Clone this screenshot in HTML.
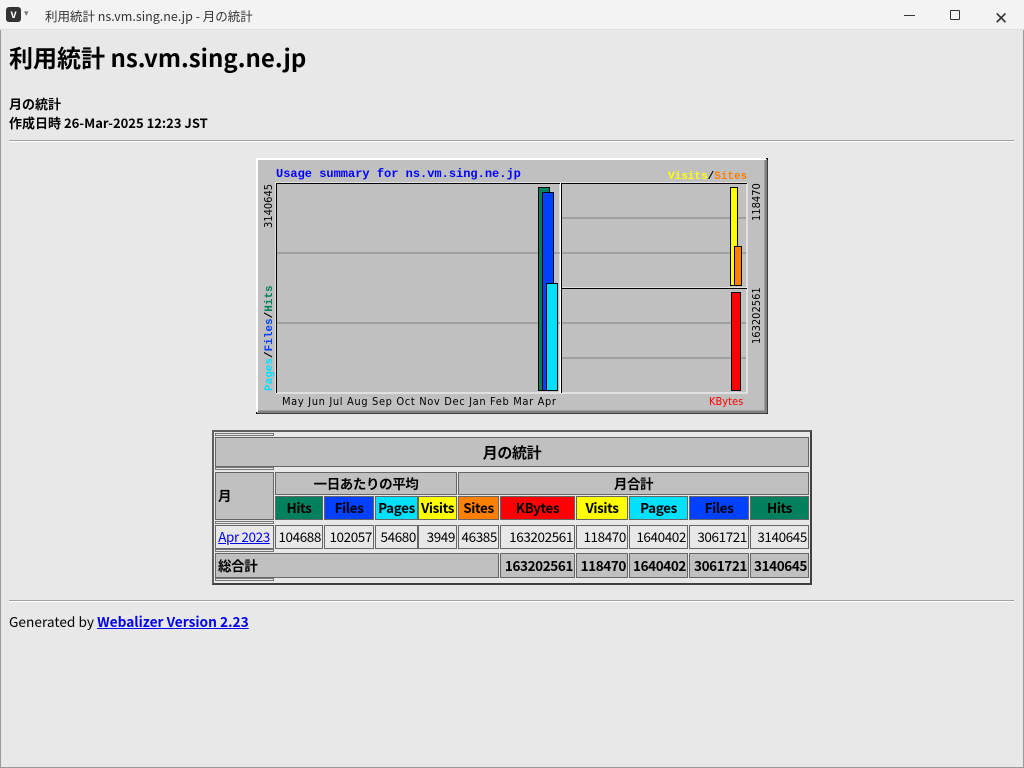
<!DOCTYPE html>
<html><head><meta charset="utf-8"><style>
*{margin:0;padding:0;box-sizing:border-box}
body{width:1024px;height:768px;background:#e8e8e8;font-family:"Noto Sans CJK JP","Liberation Sans",sans-serif;color:#000;position:relative;overflow:hidden}
.a{position:absolute}
.tb{left:0;top:0;width:1024px;height:30px;background:#f3f3f3;border-bottom:1px solid #e0e0e0}
.c{position:absolute;border:1px solid #666;font-size:13.5px;font-weight:bold;display:flex;align-items:center;justify-content:center;line-height:1;white-space:nowrap;letter-spacing:-0.4px;overflow:hidden}
.h{background:#c0c0c0}
.d{background:#e8e8e8;justify-content:flex-end;padding-right:1px;font-weight:normal}
.s{position:absolute;height:3px;border:1px solid #777;background:#e8e8e8}
</style></head><body>
<div class="a" style="left:0;top:0;width:1024px;height:768px;border:1px solid #9a9a9a;border-top:none"></div>
<div class="a tb">
 <div class="a" style="left:6px;top:7px;width:15px;height:15px;background:#333;border-radius:3px;color:#fff;font-size:11px;font-weight:bold;text-align:center;line-height:15px">v</div>
 <div class="a" style="left:24px;top:6px;font-size:9px;color:#777">▾</div>
 <div class="a" style="left:45px;top:6px;font-size:12.5px;color:#333">利用統計 ns.vm.sing.ne.jp - 月の統計</div>
 <div class="a" style="left:904px;top:15px;width:11px;height:1px;background:#333"></div>
 <div class="a" style="left:950px;top:10px;width:10px;height:10px;border:1px solid #333;border-radius:1px"></div>
 <div class="a" style="left:994px;top:4px;font-size:17px;color:#333;font-weight:300">✕</div>
</div>
<div class="a" style="left:9px;top:39px;font-size:24px;font-weight:bold">利用統計 ns.vm.sing.ne.jp</div>
<div class="a" style="left:9px;top:94px;font-size:13px;font-weight:bold;line-height:19px">月の統計<br>作成日時 26-Mar-2025 12:23 JST</div>
<div class="a" style="left:9px;top:140px;width:1005px;height:2px;border-top:1px solid #a0a0a0;border-bottom:1px solid #fff"></div>

<svg class="a" style="left:256px;top:158px" width="512" height="256" viewBox="0 0 512 256" font-family="Liberation Mono,DejaVu Sans Mono,monospace">
<rect x="0" y="0" width="512" height="256" fill="#c0c0c0"/>
<rect x="0.5" y="0.5" width="511" height="255" fill="none" stroke="#000"/>
<path d="M1 254V1H510" stroke="#fff" stroke-width="2" fill="none"/>
<path d="M2 254H510V2" stroke="#808080" stroke-width="3" fill="none"/>
<text x="20" y="19" fill="#0000ff" font-size="12" font-weight="bold">Usage summary for ns.vm.sing.ne.jp</text>
<text x="412" y="21" font-size="11" font-weight="bold"><tspan fill="#ffff00">Visits</tspan><tspan fill="#000">/</tspan><tspan fill="#ff8000">Sites</tspan></text>
<rect x="20" y="25" width="284" height="210" fill="#c0c0c0" stroke="#fff" stroke-width="1"/>
<path d="M21 95H304M21 165H304" stroke="#808080"/>
<rect x="305" y="25" width="186" height="105" fill="#c0c0c0" stroke="#fff"/>
<rect x="305" y="130" width="186" height="105" fill="#c0c0c0" stroke="#fff"/>
<path d="M21 25.5H304M20.5 25V235M305.5 25V235M305 130.5H491M305 25.5H491" stroke="#000"/>
<path d="M306 60H490M306 95H490M306 165H490M306 200H490" stroke="#808080"/>
<rect x="282.5" y="29.5" width="11" height="203" fill="#00805c" stroke="#000"/>
<rect x="286.5" y="34.5" width="11" height="198" fill="#0040ff" stroke="#000"/>
<rect x="290.5" y="125.5" width="11" height="107" fill="#00e0ff" stroke="#000"/>
<rect x="474.5" y="29.5" width="7" height="98" fill="#ffff00" stroke="#000"/>
<rect x="478.5" y="88.5" width="7" height="39" fill="#ff8000" stroke="#000"/>
<rect x="475.5" y="134.5" width="9" height="98" fill="#ff0000" stroke="#000"/>
<text transform="translate(16,233) rotate(-90)" font-size="11" font-weight="bold"><tspan fill="#00e0ff">Pages</tspan><tspan fill="#000">/</tspan><tspan fill="#0040ff">Files</tspan><tspan fill="#000">/</tspan><tspan fill="#00805c">Hits</tspan></text>
<text transform="translate(16,70) rotate(-90)" font-size="11" font-family="DejaVu Sans Condensed,Liberation Sans,sans-serif">3140645</text>
<text transform="translate(504,63) rotate(-90)" font-size="11" font-family="DejaVu Sans Condensed,Liberation Sans,sans-serif">118470</text>
<text transform="translate(504,186) rotate(-90)" font-size="11" font-family="DejaVu Sans Condensed,Liberation Sans,sans-serif">163202561</text>
<text x="26" y="247" font-size="11" font-family="DejaVu Sans Condensed,Liberation Sans,sans-serif" textLength="274" lengthAdjust="spacing">May Jun Jul Aug Sep Oct Nov Dec Jan Feb Mar Apr</text>
<text x="453" y="247" font-size="11" fill="#ff0000" font-family="DejaVu Sans Condensed,Liberation Sans,sans-serif">KBytes</text>
</svg>

<div class="a" style="left:212px;top:430px;width:600px;height:155px;border:2px solid #606060;border-right-color:#404040;border-bottom-color:#404040;background:#e8e8e8"></div>
<div class="s" style="left:215px;top:433px;width:59px"></div>
<div class="c h" style="left:215px;top:437px;width:594px;height:30px;font-size:15px">月の統計</div>
<div class="s" style="left:215px;top:467px;width:59px"></div>
<div class="c h" style="left:215px;top:472px;width:59px;height:48px;justify-content:flex-start;padding-left:2px">月</div>
<div class="c h" style="left:275px;top:472px;width:182px;height:23px">一日あたりの平均</div>
<div class="c h" style="left:458px;top:472px;width:351px;height:23px">月合計</div>
<div class="c" style="left:275px;top:496px;width:48px;height:24px;background:#00805c">Hits</div>
<div class="c" style="left:324px;top:496px;width:50px;height:24px;background:#0040ff">Files</div>
<div class="c" style="left:375px;top:496px;width:43px;height:24px;background:#00e0ff">Pages</div>
<div class="c" style="left:418px;top:496px;width:39px;height:24px;background:#ffff00">Visits</div>
<div class="c" style="left:458px;top:496px;width:41px;height:24px;background:#ff8000">Sites</div>
<div class="c" style="left:500px;top:496px;width:75px;height:24px;background:#ff0000">KBytes</div>
<div class="c" style="left:576px;top:496px;width:52px;height:24px;background:#ffff00">Visits</div>
<div class="c" style="left:629px;top:496px;width:59px;height:24px;background:#00e0ff">Pages</div>
<div class="c" style="left:689px;top:496px;width:60px;height:24px;background:#0040ff">Files</div>
<div class="c" style="left:750px;top:496px;width:59px;height:24px;background:#00805c">Hits</div>
<div class="s" style="left:215px;top:521px;width:59px"></div>
<div class="c d" style="left:215px;top:525px;width:59px;height:24px;justify-content:center"><span style="color:#0000ee;text-decoration:underline">Apr 2023</span></div>
<div class="c d" style="left:275px;top:525px;width:48px;height:24px">104688</div>
<div class="c d" style="left:324px;top:525px;width:50px;height:24px">102057</div>
<div class="c d" style="left:375px;top:525px;width:43px;height:24px">54680</div>
<div class="c d" style="left:418px;top:525px;width:39px;height:24px">3949</div>
<div class="c d" style="left:458px;top:525px;width:41px;height:24px">46385</div>
<div class="c d" style="left:500px;top:525px;width:75px;height:24px">163202561</div>
<div class="c d" style="left:576px;top:525px;width:52px;height:24px">118470</div>
<div class="c d" style="left:629px;top:525px;width:59px;height:24px">1640402</div>
<div class="c d" style="left:689px;top:525px;width:60px;height:24px">3061721</div>
<div class="c d" style="left:750px;top:525px;width:59px;height:24px">3140645</div>
<div class="s" style="left:215px;top:549px;width:59px"></div>
<div class="c h" style="left:215px;top:553px;width:284px;height:25px;justify-content:flex-start;padding-left:2px">総合計</div>
<div class="c h" style="left:500px;top:553px;width:75px;height:25px;justify-content:flex-end;padding-right:1px">163202561</div>
<div class="c h" style="left:576px;top:553px;width:52px;height:25px;justify-content:flex-end;padding-right:1px">118470</div>
<div class="c h" style="left:629px;top:553px;width:59px;height:25px;justify-content:flex-end;padding-right:1px">1640402</div>
<div class="c h" style="left:689px;top:553px;width:60px;height:25px;justify-content:flex-end;padding-right:1px">3061721</div>
<div class="c h" style="left:750px;top:553px;width:59px;height:25px;justify-content:flex-end;padding-right:1px">3140645</div>
<div class="s" style="left:215px;top:578px;width:59px"></div>

<div class="a" style="left:9px;top:600px;width:1005px;height:2px;border-top:1px solid #a0a0a0;border-bottom:1px solid #fff"></div>
<div class="a" style="left:9px;top:611px;font-size:13.7px">Generated by <b style="color:#0000ee;text-decoration:underline">Webalizer Version 2.23</b></div>
</body></html>
